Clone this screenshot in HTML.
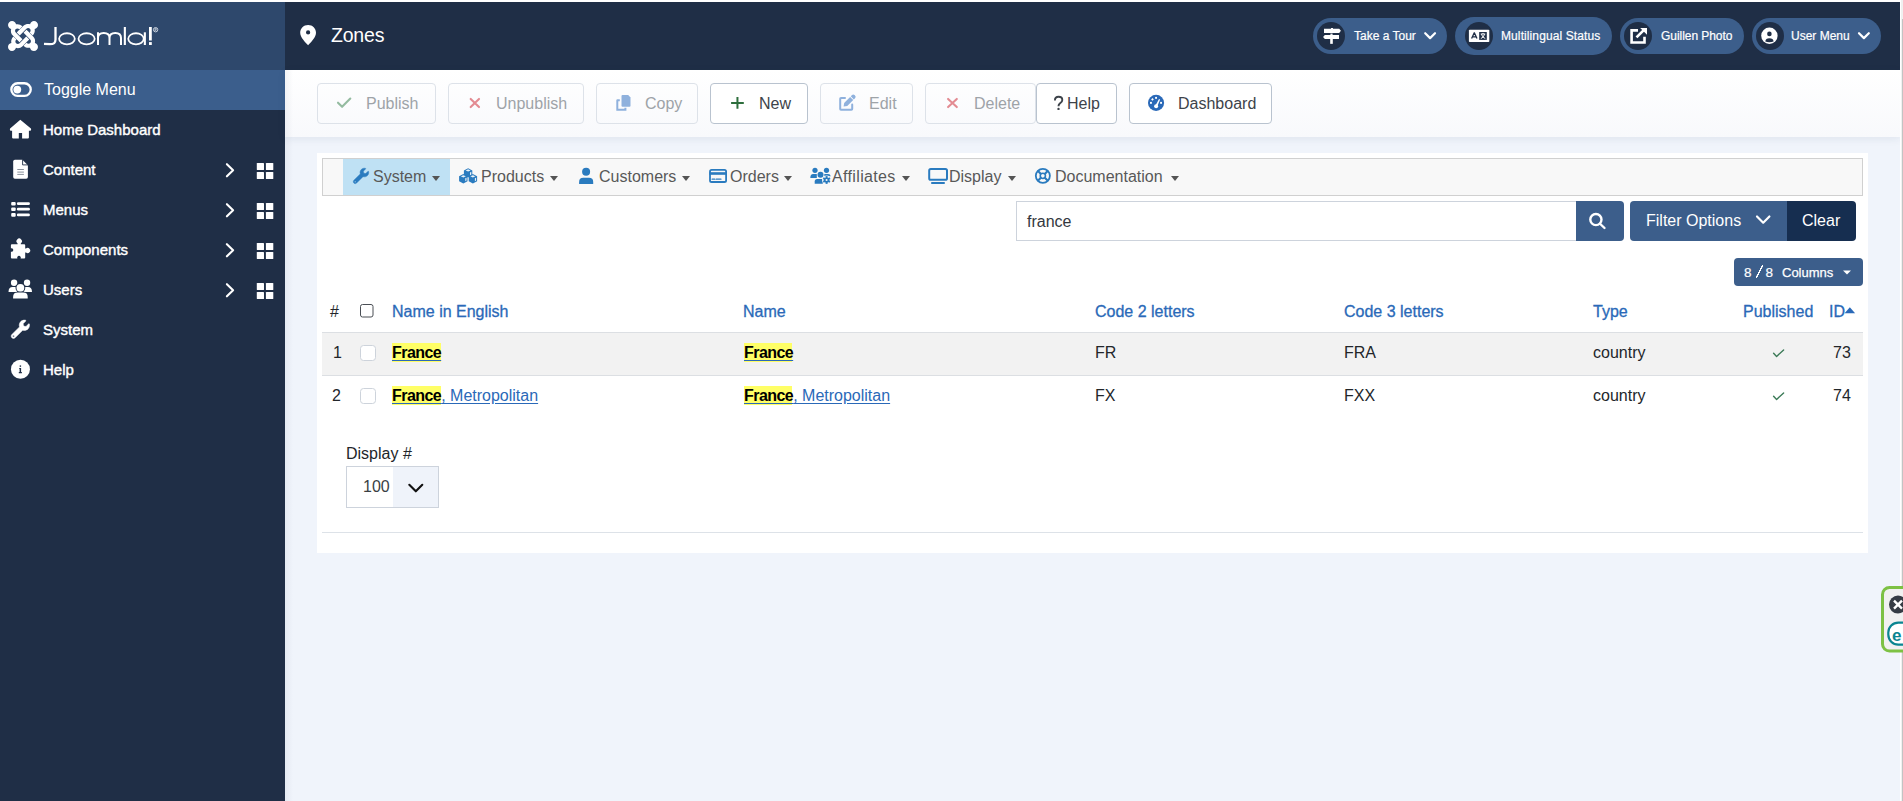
<!DOCTYPE html>
<html lang="en">
<head>
<meta charset="utf-8">
<title>Zones - Administration</title>
<style>
*{box-sizing:border-box;margin:0;padding:0}
html,body{width:1903px;height:801px;overflow:hidden;background:#fff}
body{position:relative;font-family:"Liberation Sans",sans-serif;color:#22262a}
.a{position:absolute}
.t{position:absolute;white-space:nowrap;line-height:20px}
svg{position:absolute;overflow:visible}
/* layout */
#page{position:absolute;left:0;top:2px;width:1900px;height:799px;background:#f0f4fb}
#sidebar{position:absolute;left:0;top:0;width:285px;height:799px;background:#1f2e46}
#logo{position:absolute;left:0;top:0;width:285px;height:68px;background:#2e486c}
#toggle{position:absolute;left:0;top:68px;width:285px;height:40px;background:#3b5e8c}
#header{position:absolute;left:285px;top:0;width:1615px;height:68px;background:#1f2e46}
#subhead{position:absolute;left:285px;top:68px;width:1615px;height:67px;background:linear-gradient(#fff,#f8f9fc);box-shadow:0 2px 8px rgba(30,50,90,.08)}
#scroll{position:absolute;left:1900px;top:0;width:3px;height:801px;background:#f0f0f0;border-left:1px solid #fff}
#scroll i{position:absolute;left:1px;top:19px;width:1px;height:782px;background:#c3c3c3}
.side{color:#fff;font-size:15px;-webkit-text-stroke:.4px #fff}
.pill{position:absolute;height:36px;border-radius:18px;background:#3c5e8b;top:16px}
.pill .c{position:absolute;left:4px;top:4px;width:28px;height:28px;border-radius:14px;background:#1f2e46}
.pt{color:#fff;font-size:12px;-webkit-text-stroke:.2px #fff}
.btn{position:absolute;top:81px;height:41px;border:1px solid #dde2e9;border-radius:4px;background:transparent}
.btn.on{border-color:#b9c3cf;background:#fff}
.bt{font-size:16px;color:#9ea3a8}
.bt.on{color:#3d434a}
#card{position:absolute;left:317px;top:151px;width:1551px;height:400px;background:#fff}
#nav{position:absolute;left:322px;top:156px;width:1541px;height:38px;background:#f8f8f8;border:1px solid #d0d0d0}
#navact{position:absolute;left:343px;top:157px;width:107px;height:36px;background:#bfe1f4}
.nt{font-size:16px;color:#585858}
.ni{fill:#2a79bb}
.caret{position:absolute;width:0;height:0;border-left:4.5px solid transparent;border-right:4.5px solid transparent;border-top:5px solid #555}
.th{font-size:16px;color:#2a69b8;-webkit-text-stroke:.3px #2a69b8}
.td{font-size:16px;color:#22262a}
.hl{position:absolute;background:#ffff66;height:19px}
.lk{color:#2a69b8;text-decoration:underline;text-underline-offset:2px}
.bold{font-weight:bold;color:#000;letter-spacing:-.55px}
</style>
</head>
<body>
<div id="page">
  <!-- SIDEBAR -->
  <div id="sidebar">
    <div id="logo"></div>
    <div id="toggle"></div>
  </div>
  <!-- HEADER -->
  <div id="header"></div>
  <div id="subhead"></div>
  <div class="a" style="left:285px;top:68px;width:8px;height:731px;background:linear-gradient(90deg,rgba(20,40,80,.05),rgba(20,40,80,0))"></div>
  <div id="card"></div>
  <div id="nav"></div>
  <div id="navact"></div>
</div>
<div id="scroll"><i></i></div>



<!-- sidebar texts -->
<div class="t side" style="left:44px;top:80px;font-size:16px;-webkit-text-stroke:0">Toggle Menu</div>
<div class="t side" style="left:43px;top:120px">Home Dashboard</div>
<div class="t side" style="left:43px;top:160px">Content</div>
<div class="t side" style="left:43px;top:200px">Menus</div>
<div class="t side" style="left:43px;top:240px">Components</div>
<div class="t side" style="left:43px;top:280px">Users</div>
<div class="t side" style="left:43px;top:320px">System</div>
<div class="t side" style="left:43px;top:360px">Help</div>

<!-- header title -->
<div class="t" style="left:331px;top:25px;font-size:19.5px;color:#fff;letter-spacing:-.2px">Zones</div>

<!-- pills -->
<div class="pill" style="left:1313px;top:18px;width:134px"><div class="c"></div></div>
<div class="pill" style="left:1455px;top:17px;width:157px;height:38px;border-radius:19px"><div class="c" style="left:10px;top:5px;width:28px;height:28px"></div></div>
<div class="pill" style="left:1620px;top:18px;width:124px"><div class="c"></div></div>
<div class="pill" style="left:1752px;top:18px;width:129px"><div class="c"></div></div>
<div class="t pt" style="left:1354px;top:26px">Take a Tour</div>
<div class="t pt" style="left:1501px;top:26px;letter-spacing:.1px">Multilingual Status</div>
<div class="t pt" style="left:1661px;top:26px;letter-spacing:-.05px">Guillen Photo</div>
<div class="t pt" style="left:1791px;top:26px">User Menu</div>

<!-- toolbar buttons -->
<div class="btn" style="left:317px;top:83px;width:119px"></div>
<div class="btn" style="left:448px;top:83px;width:136px"></div>
<div class="btn" style="left:596px;top:83px;width:102px"></div>
<div class="btn on" style="left:710px;top:83px;width:98px"></div>
<div class="btn" style="left:820px;top:83px;width:93px"></div>
<div class="btn" style="left:925px;top:83px;width:111px"></div>
<div class="btn on" style="left:1036px;top:83px;width:81px"></div>
<div class="btn on" style="left:1129px;top:83px;width:143px"></div>
<div class="t bt" style="left:366px;top:94px">Publish</div>
<div class="t bt" style="left:496px;top:94px">Unpublish</div>
<div class="t bt" style="left:645px;top:94px">Copy</div>
<div class="t bt on" style="left:759px;top:94px">New</div>
<div class="t bt" style="left:869px;top:94px">Edit</div>
<div class="t bt" style="left:974px;top:94px">Delete</div>
<div class="t bt on" style="left:1067px;top:94px">Help</div>
<div class="t bt on" style="left:1178px;top:94px">Dashboard</div>

<!-- navbar -->
<div class="t nt" style="left:373px;top:167px">System</div>
<div class="t nt" style="left:481px;top:167px">Products</div>
<div class="t nt" style="left:599px;top:167px">Customers</div>
<div class="t nt" style="left:730px;top:167px">Orders</div>
<div class="t nt" style="left:832px;top:167px;letter-spacing:.35px">Affiliates</div>
<div class="t nt" style="left:949px;top:167px">Display</div>
<div class="t nt" style="left:1055px;top:167px">Documentation</div>
<div class="caret" style="left:432px;top:176px"></div>
<div class="caret" style="left:550px;top:176px"></div>
<div class="caret" style="left:682px;top:176px"></div>
<div class="caret" style="left:784px;top:176px"></div>
<div class="caret" style="left:902px;top:176px"></div>
<div class="caret" style="left:1008px;top:176px"></div>
<div class="caret" style="left:1171px;top:176px"></div>

<!-- search -->
<div class="a" style="left:1016px;top:201px;width:561px;height:40px;border:1px solid #cdd3dc;background:#fff"></div>
<div class="t" style="left:1027px;top:212px;font-size:16px;color:#33383e">france</div>
<div class="a" style="left:1576px;top:201px;width:48px;height:40px;background:#3c5e8b;border-radius:0 4px 4px 0"></div>
<div class="a" style="left:1630px;top:201px;width:157px;height:40px;background:#3c5e8b;border-radius:4px 0 0 4px"></div>
<div class="a" style="left:1787px;top:201px;width:69px;height:40px;background:#162e50;border-radius:0 4px 4px 0"></div>
<div class="t" style="left:1646px;top:211px;font-size:16px;color:#fff">Filter Options</div>
<div class="t" style="left:1802px;top:211px;font-size:16px;color:#fff">Clear</div>
<div class="a" style="left:1734px;top:258px;width:129px;height:28px;background:#3c5e8b;border-radius:4px"></div>
<div class="t" style="left:1744px;top:263px;font-size:13.5px;color:#fff;-webkit-text-stroke:.2px #fff">8</div>
<div class="t" style="left:1765.5px;top:263px;font-size:13.5px;color:#fff;-webkit-text-stroke:.2px #fff">8</div>
<div class="a" style="left:1756px;top:265px;width:7px;height:13px;background:linear-gradient(to bottom right,transparent calc(50% - .8px),#fff calc(50% - .6px),#fff calc(50% + .6px),transparent calc(50% + .8px))"></div>
<div class="t" style="left:1782px;top:263px;font-size:13px;color:#fff;-webkit-text-stroke:.25px #fff">Columns</div>

<!-- table -->
<div class="a" style="left:322px;top:332px;width:1541px;height:44px;background:#f2f2f2;border-top:1px solid #dcdfe3;border-bottom:1px solid #dcdfe3"></div>
<div class="t td" style="left:330px;top:302px">#</div>
<div class="t th" style="left:392px;top:302px">Name in English</div>
<div class="t th" style="left:743px;top:302px">Name</div>
<div class="t th" style="left:1095px;top:302px">Code 2 letters</div>
<div class="t th" style="left:1344px;top:302px">Code 3 letters</div>
<div class="t th" style="left:1593px;top:302px">Type</div>
<div class="t th" style="left:1743px;top:302px">Published</div>
<div class="t th" style="left:1829px;top:302px">ID</div>

<div class="hl" style="left:392px;top:343px;width:49px"></div>
<div class="hl" style="left:744px;top:343px;width:48px"></div>
<div class="hl" style="left:392px;top:386px;width:49px"></div>
<div class="hl" style="left:744px;top:386px;width:48px"></div>

<div class="t td" style="left:333px;top:343px">1</div>
<div class="t td lk" style="left:392px;top:343px"><span class="bold">France</span></div>
<div class="t td lk" style="left:744px;top:343px"><span class="bold">France</span></div>
<div class="t td" style="left:1095px;top:343px">FR</div>
<div class="t td" style="left:1344px;top:343px">FRA</div>
<div class="t td" style="left:1593px;top:343px">country</div>
<div class="t td" style="left:1833px;top:343px">73</div>

<div class="t td" style="left:332px;top:386px">2</div>
<div class="t td lk" style="left:392px;top:386px"><span class="bold">France</span>, Metropolitan</div>
<div class="t td lk" style="left:744px;top:386px"><span class="bold">France</span>, Metropolitan</div>
<div class="t td" style="left:1095px;top:386px">FX</div>
<div class="t td" style="left:1344px;top:386px">FXX</div>
<div class="t td" style="left:1593px;top:386px">country</div>
<div class="t td" style="left:1833px;top:386px">74</div>

<!-- display # -->
<div class="t td" style="left:346px;top:444px">Display #</div>
<div class="a" style="left:346px;top:466px;width:93px;height:42px;border:1px solid #cdd3dc;background:linear-gradient(90deg,#fff 46px,#eff3fa 46px)"></div>
<div class="t td" style="left:363px;top:477px;color:#3a3f44">100</div>
<div class="a" style="left:322px;top:532px;width:1541px;height:1px;background:#dde2e8"></div>

<svg id="ov" width="1903" height="801" viewBox="0 0 1903 801" style="left:0;top:0;position:absolute">
<defs>
<path id="jp" d="M.6 92.1C.6 58.8 27.4 32 60.4 32c30 0 54.5 21.9 59.2 50.2 32.6-7.6 67.1.6 96.5 30l-44.3 44.3c-20.5-20.5-42.6-16.3-55.4-3.5-14.3 14.3-14.3 37.9 0 52.2l99.5 99.5-44 44.3c-87.7-87.2-49.7-49.7-99.8-99.7-26.8-26.5-35-64.8-24.8-98.9C20.4 144.6.6 120.7.6 92.1z"/>
<path id="wrench" d="M507.73 109.1c-2.24-9.030-13.54-12.09-20.12-5.51l-74.36 74.36-67.88-11.31-11.310-67.88 74.36-74.36c6.62-6.62 3.43-17.9-5.66-20.16-47.38-11.74-99.55.91-136.58 37.93-39.64 39.64-50.55 97.1-34.05 147.2L18.74 402.76c-24.99 24.99-24.99 65.51 0 90.5 24.99 24.99 65.51 24.99 90.5 0l213.21-213.21c50.12 16.71 107.47 5.68 147.37-34.22 37.07-37.07 49.7-89.32 37.91-136.73zM64 472c-13.25 0-24-10.75-24-24 0-13.26 10.75-24 24-24s24 10.74 24 24c0 13.25-10.75 24-24 24z"/>
<g id="grid"><rect x="0" y="0" width="7.2" height="7.1" rx=".6"/><rect x="9.1" y="0" width="7.4" height="7.1" rx=".6"/><rect x="0" y="9" width="7.2" height="7" rx=".6"/><rect x="9.1" y="9" width="7.4" height="7" rx=".6"/></g>
</defs>
<!-- Joomla logo -->
<g transform="translate(8,21) scale(0.067)" fill="#fff"><g transform="translate(0,-32)"><use href="#jp"/><use href="#jp" transform="rotate(90 224 256)"/><use href="#jp" transform="rotate(180 224 256)"/><use href="#jp" transform="rotate(270 224 256)"/></g></g>
<!-- wordmark -->
<g fill="none" stroke="#fff" stroke-width="2">
<path d="M55.5 27V39.5C55.5 43.6 53.3 44.2 49.8 44.2L44 43.8" stroke-width="2.3"/>
<ellipse cx="66.95" cy="38.8" rx="7.85" ry="5.55" stroke-width="1.8"/>
<ellipse cx="86.6" cy="38.8" rx="8.1" ry="5.55" stroke-width="1.8"/>
<path d="M98 32.3V45M98 38C98 34.5 100.5 33 103.75 33C107 33 109.5 34.5 109.5 38V45M109.5 38C109.5 34.5 112 33 115.25 33C118.5 33 121 34.5 121 38V45" stroke-width="2"/>
<path d="M124.85 27V45" stroke-width="2.1"/>
<ellipse cx="136" cy="38.8" rx="7.75" ry="5.55" stroke-width="1.8"/>
<path d="M144.85 32.3V45" stroke-width="2.1"/>
<path d="M150.4 27V40.5" stroke-width="2.8"/>
</g>
<rect x="149" y="42.1" width="2.8" height="2.9" fill="#fff"/>
<circle cx="155.6" cy="29.7" r="2.2" fill="none" stroke="#e6ebf2" stroke-width=".8"/><path d="M154.9 31V28.5H156Q156.6 28.5 156.6 29.2Q156.6 29.8 156 29.8H155L156.5 31" fill="none" stroke="#e6ebf2" stroke-width=".55"/>

<!-- toggle icon -->
<rect x="11.35" y="83.25" width="19.4" height="12.6" rx="6.3" fill="none" stroke="#fff" stroke-width="2.3"/>
<circle cx="17.3" cy="89.6" r="3.9" fill="#fff"/>
<!-- home -->
<path fill="#fff" d="M20.3 119.8L30.9 128.6Q31.6 129.6 30.6 130.7H28.9V137.4Q28.9 138.4 27.9 138.4H22.1V133.1H18.8V138.4H13.1Q12.1 138.4 12.1 137.4V130.7H10.4Q9.4 129.6 10.1 128.6Z"/>
<!-- file -->
<path fill="#fff" d="M14.9 159.8H22.4L27.9 165.3V177Q27.9 178.7 26.2 178.7H14.9Q13.2 178.7 13.2 177V161.5Q13.2 159.8 14.9 159.8Z"/>
<path d="M22.6 159.6V164.9H28.1" fill="none" stroke="#1f2e46" stroke-width=".9"/>
<path d="M17.3 169.5H23.9M17.3 172.1H23.9M17.3 174.4H23.9" stroke="#7c8591" stroke-width=".9"/>
<!-- list -->
<g fill="#fff"><rect x="11.2" y="202" width="4.5" height="3.6" rx="1"/><rect x="11.2" y="207.4" width="4.5" height="3.6" rx="1"/><rect x="11.2" y="213" width="4.5" height="3.8" rx="1"/>
<rect x="16.9" y="202.3" width="13" height="2.8" rx="1.3"/><rect x="16.9" y="207.7" width="13" height="2.8" rx="1.3"/><rect x="16.9" y="213.4" width="13" height="2.8" rx="1.3"/></g>
<!-- puzzle -->
<path fill="#fff" fill-rule="evenodd" d="M11.9 244.3H17.6V243.4A2.7 2.7 0 1 1 20.8 243.4V244.3H24.2Q25.2 244.3 25.2 245.3V248.4H26A2.6 2.6 0 1 1 26 252.5H25.2V257.4Q25.2 258.4 24.2 258.4H20.6A1.8 1.8 0 1 0 17.4 258.4H11.9Q10.9 258.4 10.9 257.4V251.7A1.8 1.8 0 1 0 10.9 248.3V245.3Q10.9 244.3 11.9 244.3Z"/>
<!-- users -->
<g fill="#fff">
<circle cx="14.1" cy="282.8" r="3.2"/><circle cx="27.05" cy="282.8" r="3.2"/>
<path d="M8.5 291.9Q8.5 286.9 12.5 286.9H17.5L17.5 291.9Z"/><path d="M32 291.9Q32 286.9 28 286.9H23.5L23.5 291.9Z"/>
<circle cx="20.4" cy="287.85" r="4.9" fill="#1f2e46"/>
<circle cx="20.4" cy="287.85" r="3.9"/>
<path d="M12.3 299.2V297Q12.3 291.8 17.5 291.8H23.5Q28.5 291.8 28.5 297V299.2Z" fill="#1f2e46"/>
<path d="M13.1 298.4V297Q13.1 292.6 17.5 292.6H23.3Q27.7 292.6 27.7 297V298.4Z"/>
</g>
<!-- wrench sidebar -->
<use href="#wrench" fill="#fff" stroke="#fff" stroke-width="14" transform="translate(11.2,320.1) scale(0.0358)"/>
<!-- info -->
<circle cx="20.45" cy="369.25" r="9.5" fill="#fff"/>
<g fill="#1f2e46"><rect x="19.7" y="365.4" width="1.4" height="1.4"/><path d="M19.2 367.9H21.1V372.1H21.9V373.2H18.8V372.1H19.6V368.9H19.2Z"/></g>

<!-- chevrons + grids -->
<g fill="none" stroke="#fff" stroke-width="2.1" stroke-linecap="round" stroke-linejoin="round">
<path d="M226.9 164.2L233.1 170.2L226.9 176.3"/>
<path d="M226.9 204.2L233.1 210.2L226.9 216.3"/>
<path d="M226.9 244.2L233.1 250.2L226.9 256.3"/>
<path d="M226.9 284.2L233.1 290.2L226.9 296.3"/>
</g>
<g fill="#fff"><use href="#grid" x="256.8" y="163"/><use href="#grid" x="256.8" y="203"/><use href="#grid" x="256.8" y="243"/><use href="#grid" x="256.8" y="283"/></g>

<!-- header pin -->
<path fill="#fff" fill-rule="evenodd" d="M308.1 24.9C303.6 24.9 300.2 28.3 300.2 32.8C300.2 37.2 305.3 42.5 308.1 45.2C310.9 42.5 316 37.2 316 32.8C316 28.3 312.6 24.9 308.1 24.9ZM308.1 30.3A2.1 2.1 0 1 0 308.1 34.5A2.1 2.1 0 1 0 308.1 30.3Z"/>

<!-- pill icons -->
<g fill="#fff">
<path d="M1331 27.9H1333V28.7H1339.2L1340.9 30.85L1339.2 33H1324V28.7H1331Z"/>
<path d="M1324.8 34.9H1339V39H1324.8L1323.1 36.95Z"/>
<rect x="1330.4" y="33.6" width="2.2" height="1.3"/>
<rect x="1330.2" y="39" width="2.6" height="4.85"/>
</g>
<rect x="1468.9" y="29.8" width="20.4" height="12.2" rx=".8" fill="#fff"/>
<path d="M1471.6 38.6L1474.2 33H1474.4L1477 38.6M1472.5 36.8H1476.1" fill="none" stroke="#1f2e46" stroke-width="1.3"/>
<rect x="1479.2" y="32" width="7.6" height="7.9" fill="#1f2e46"/>
<path d="M1480.7 34H1485.3M1483 32.9V34M1481.4 34.2Q1482.3 37.3 1485.3 38.6M1484.6 34.2Q1483.8 37.3 1480.8 38.6" fill="none" stroke="#fff" stroke-width="1"/>
<g fill="none" stroke="#fff" stroke-width="2.6">
<path d="M1638 30.35H1631.6V42.55H1644.5V36.7"/>
<path d="M1636.5 37.4L1643.5 30.4"/>
</g>
<path d="M1640.2 27.9H1647V34.7Z" fill="#fff"/>
<circle cx="1769.4" cy="35.8" r="8.2" fill="#fff"/>
<circle cx="1769.4" cy="33.9" r="2.3" fill="#1f2e46"/>
<path d="M1765.3 41.4Q1765.6 38.2 1769.4 38.2Q1773.2 38.2 1773.6 41.4Q1771.8 42.2 1769.4 42.2Q1767 42.2 1765.3 41.4Z" fill="#1f2e46"/>
<g fill="none" stroke="#fff" stroke-width="2.2" stroke-linecap="round" stroke-linejoin="round">
<path d="M1425.2 33.2L1430.1 38.1L1435 33.2"/>
<path d="M1859 33.2L1863.9 38.1L1868.8 33.2"/>
</g>

<!-- toolbar icons -->
<path d="M338 102.7L342.1 106.8L350.3 98.6" fill="none" stroke="#94bba0" stroke-width="2.1" stroke-linecap="round" stroke-linejoin="round"/>
<path d="M470.7 98.9L479 107.1M479 98.9L470.7 107.1" fill="none" stroke="#e38b92" stroke-width="2.1" stroke-linecap="round"/>
<g fill="#8fb1dd"><path d="M622.5 95H628.2L630.5 97.4V105.7Q630.5 106.7 629.5 106.7H622.5Q621.5 106.7 621.5 105.7V96Q621.5 95 622.5 95Z"/></g>
<path d="M619.8 100.2H617.5Q617.3 100.2 617.3 100.4V109.7H625.4V107.8" fill="none" stroke="#8fb1dd" stroke-width="2"/>
<path d="M731.1 102.9H743.8M737.45 96.9V108.8" fill="none" stroke="#2e6e3d" stroke-width="2"/>
<path d="M845 98H841Q840.2 98 840.2 98.8V109.1Q840.2 109.8 841 109.8H851.4Q852.2 109.8 852.2 109.1V104.4" fill="none" stroke="#8fb1dd" stroke-width="2" stroke-linecap="round"/>
<g transform="translate(843.6,106.6) rotate(-45)" fill="#8fb1dd"><path d="M0 0L3 -2.2H11.4V2.2H3Z"/><path d="M12.3 -2.2H14.2Q15.9 -2.2 15.9 0Q15.9 2.2 14.2 2.2H12.3Z"/></g>
<path d="M948.1 98.9L956.8 107.1M956.8 98.9L948.1 107.1" fill="none" stroke="#e38b92" stroke-width="2.1" stroke-linecap="round"/>
<circle cx="1156.05" cy="102.9" r="8.05" fill="#2a69b8"/>
<g fill="#fff"><rect x="1150" y="101.9" width="1.9" height="1.9"/><rect x="1151.5" y="98.5" width="1.9" height="1.9" transform="rotate(45 1152.45 99.45)"/><rect x="1155.1" y="96.9" width="1.9" height="1.9"/><rect x="1160.1" y="101.9" width="1.9" height="1.9"/>
<circle cx="1156.1" cy="106.3" r="2"/><path d="M1155.2 106L1159 98.9L1160.1 99.4L1157.1 106.8Z"/></g>
<path d="M1054.9 100.4C1054.9 97.9 1056.5 96.7 1058.6 96.7C1060.8 96.7 1062.3 98 1062.3 99.9C1062.3 101.8 1060.9 102.5 1059.8 103.4C1058.9 104.1 1058.5 104.8 1058.5 106.3" fill="none" stroke="#3d434a" stroke-width="1.9"/><circle cx="1058.5" cy="108.9" r="1.2" fill="#3d434a"/>

<!-- navbar icons -->
<use href="#wrench" fill="#2a7bbf" stroke="#2a7bbf" stroke-width="16" transform="translate(353.3,168.2) scale(0.0301)"/>
<g fill="#2a7bbf">
<path d="M463.9 170.4L468.1 168.2L472.3 170.4V175.2L468.1 177.4L463.9 175.2Z"/>
<path d="M459.1 176.3L463.3 174.1L467.5 176.3V181.3L463.3 183.6L459.1 181.3Z"/>
<path d="M468.7 176.3L472.9 174.1L477.1 176.3V181.3L472.9 183.6L468.7 181.3Z"/>
</g>
<g fill="#bfe0f5" opacity=".0"></g>
<g fill="#fff" opacity=".9">
<path d="M465.6 170.4L468.1 169.3L470.6 170.4L468.1 171.5Z"/>
<path d="M470 172.4L471.3 171.8V174.6L470 175.3Z"/>
<path d="M460.8 176.3L463.3 175.2L465.8 176.3L463.3 177.4Z"/>
<path d="M465.3 178.3L466.5 177.7V180.6L465.3 181.3Z"/>
<path d="M470.4 176.3L472.9 175.2L475.4 176.3L472.9 177.4Z"/>
<path d="M474.9 178.3L476.1 177.7V180.6L474.9 181.3Z"/>
</g>
<g fill="#2a7bbf">
<circle cx="586.1" cy="171.8" r="4"/>
<path d="M579.1 183.9V182Q579.1 177.8 583.3 177.8H589Q593.2 177.8 593.2 182V183.9Z"/>
</g>
<g fill="none" stroke="#2a7bbf">
<rect x="710" y="169.8" width="16.1" height="12.2" rx="1.6" stroke-width="1.8"/>
</g>
<rect x="709.5" y="172.2" width="17" height="2.6" fill="#2a7bbf"/>
<path d="M712.1 179.2H714.9M716.3 179.2H721" stroke="#2a7bbf" stroke-width="1.2" stroke-linecap="round"/>
<g fill="#2a7bbf">
<circle cx="815" cy="170.3" r="2.6"/><circle cx="826.5" cy="170.3" r="2.6"/>
<path d="M810.3 177.9Q810.3 174 813.2 174H816.8V177.9Z"/>
<path d="M824.3 177V174H828Q830.5 174 830.7 176.2Z"/>
<circle cx="820.5" cy="174.8" r="3"/>
<path d="M814.7 183.8V181.6Q814.7 179.1 817.2 179.1H822.8V183.8Z"/>
</g>
<g transform="translate(826.6,180)">
<circle r="4.6" fill="#f8f8f8"/><g fill="#2a7bbf"><circle r="2.6"/><rect x="-1" y="-3.9" width="2" height="7.8"/><rect x="-1" y="-3.9" width="2" height="7.8" transform="rotate(60)"/><rect x="-1" y="-3.9" width="2" height="7.8" transform="rotate(120)"/></g><circle r="1.05" fill="#f8f8f8"/>
</g>
<rect x="929.2" y="168.9" width="17.8" height="10.9" rx="1.6" fill="none" stroke="#2a7bbf" stroke-width="2"/>
<rect x="931" y="182" width="14" height="1.9" rx=".9" fill="#2a7bbf"/>
<g fill="none" stroke="#2a7bbf">
<circle cx="1042.85" cy="175.85" r="7.05" stroke-width="1.8"/>
<circle cx="1042.85" cy="175.85" r="2.6" stroke-width="1.6"/>
<path d="M1037.6 170.6L1040.9 173.9M1048.1 170.6L1044.8 173.9M1037.6 181.1L1040.9 177.8M1048.1 181.1L1044.8 177.8" stroke-width="2.1"/>
</g>

<!-- search icon -->
<g fill="none" stroke="#fff" stroke-width="2.4" stroke-linecap="round">
<circle cx="1595.9" cy="219.55" r="5.6"/>
<path d="M1600.3 224L1604.5 228"/>
</g>
<path d="M1757 216.5L1763.2 222.7L1769.4 216.5" fill="none" stroke="#fff" stroke-width="2.2" stroke-linecap="round" stroke-linejoin="round"/>
<path d="M1843 270.5H1851L1847 274.5Z" fill="#fff"/>

<!-- table -->
<rect x="360.5" y="304.5" width="12.5" height="12.5" rx="2" fill="#fff" stroke="#4a4f55" stroke-width="1"/>
<rect x="360.5" y="345.5" width="15" height="15" rx="3" fill="#fff" stroke="#cdd3db" stroke-width="1"/>
<rect x="360.5" y="388.5" width="15" height="15" rx="3" fill="#fff" stroke="#cdd3db" stroke-width="1"/>
<path d="M1844.6 313.3L1849.85 307.3L1855.1 313.3Z" fill="#2a69b8"/>
<g fill="none" stroke="#3b7a57" stroke-width="1.4" stroke-linecap="round" stroke-linejoin="round">
<path d="M1773.6 353.2L1776.6 356.4L1783.6 349.9"/>
<path d="M1773.6 396.2L1776.6 399.4L1783.6 392.9"/>
</g>
<path d="M409.3 484.8L415.8 491.3L422.3 484.8" fill="none" stroke="#111" stroke-width="2.1" stroke-linecap="round" stroke-linejoin="round"/>

<!-- ESET widget -->
<rect x="1882.5" y="587.5" width="30" height="63.5" rx="7" fill="#f1f1f1" stroke="#7dc144" stroke-width="3"/>
<circle cx="1898" cy="604.6" r="9" fill="#363c45"/>
<path d="M1894 600.6L1902 608.6M1902 600.6L1894 608.6" stroke="#fff" stroke-width="2.4"/>
<rect x="1888.3" y="622.6" width="25" height="22" rx="10" fill="#fff" stroke="#0a8591" stroke-width="2.2"/>
<text x="1892" y="640.5" font-family="Liberation Sans" font-weight="bold" font-size="17" fill="#0a8591">e</text>

</svg>
</body>
</html>
